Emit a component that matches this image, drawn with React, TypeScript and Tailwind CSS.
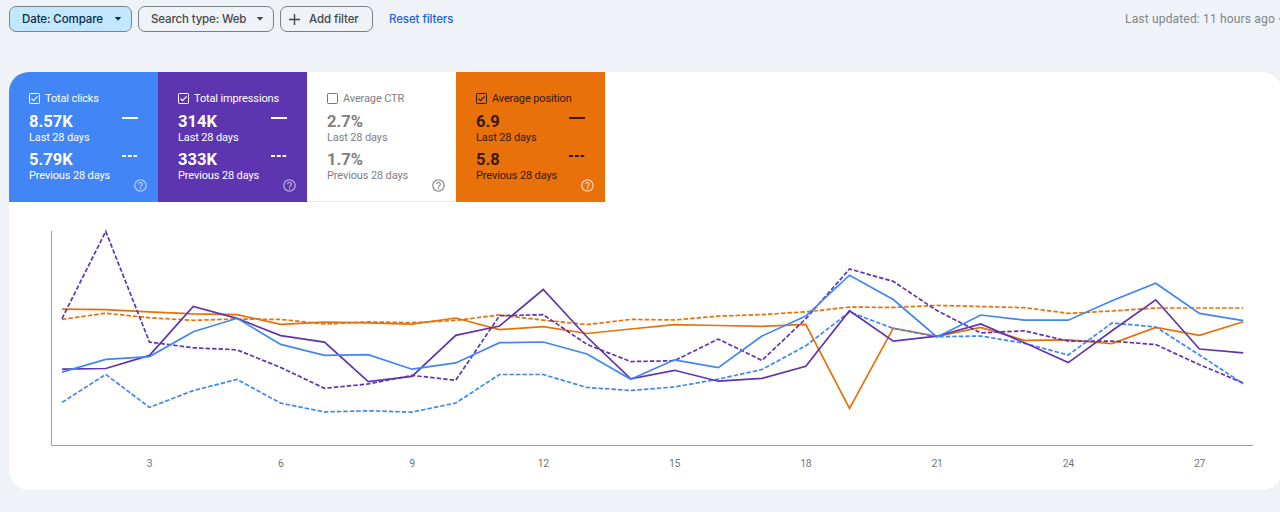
import clsx from "clsx"

const metrics = [
  { label: "Total clicks", current: "8.57K", previous: "5.79K", checked: true, tile: "bg-[#4285f4] text-white", box: "text-white", help: "text-white/60" },
  { label: "Total impressions", current: "314K", previous: "333K", checked: true, tile: "bg-[#5e35b1] text-white", box: "text-white", help: "text-white/60" },
  { label: "Average CTR", current: "2.7%", previous: "1.7%", checked: false, tile: "bg-white text-[#808080] border-b border-[#e8e8e8]", box: "text-[#757575]", help: "text-[#8c8c8c]" },
  { label: "Average position", current: "6.9", previous: "5.8", checked: true, tile: "bg-[#e8710a] text-[#35190a]", box: "text-[#35190a]", help: "text-white/70" },
]

// Vertical positions in chart space, one value per day
const series = [
  {
    color: "#e8710a",
    dashed: false,
    values: [309.2, 309.6, 311.8, 313.9, 314.6, 324.4, 322.1, 322.9, 324.2, 318, 329.6, 326.7, 333.5, 329, 324.6, 325.5, 326.4, 324.4, 408.5, 328.2, 336.4, 327.4, 340.3, 339.8, 343.6, 327.4, 335.3, 321.7],
  },
  {
    color: "#e8710a",
    dashed: true,
    values: [319.4, 313.2, 317.8, 320.3, 319, 319.4, 324, 321.9, 322.7, 320.4, 314.9, 320.2, 324.5, 319.4, 320, 316.1, 314.6, 311.8, 307.1, 307.4, 305.4, 306.5, 307.7, 313.3, 311, 308, 308, 308],
  },
  {
    color: "#5e35b1",
    dashed: true,
    values: [318.6, 231.4, 342.1, 347.8, 349.8, 367.5, 388.3, 384, 375.4, 380.3, 315.7, 314.7, 344.4, 361.6, 360.7, 339.1, 360.4, 318.8, 269, 281.4, 310.6, 332.9, 330.8, 341.1, 341.1, 344.6, 364.7, 383],
  },
  {
    color: "#4285f4",
    dashed: true,
    values: [402.4, 374.4, 407.4, 390.6, 379.4, 403.2, 411.9, 410.8, 412.1, 403, 374.5, 374.5, 387.5, 390.4, 387, 379.1, 369.5, 345.8, 312, 328.4, 336.8, 336, 343.3, 355, 323, 327, 355, 383.7],
  },
  {
    color: "#5e35b1",
    dashed: false,
    values: [369.2, 368.5, 355.4, 306.4, 318.4, 335.6, 342.1, 381.7, 376.4, 335.3, 326, 289.5, 337, 378.8, 370.3, 381.2, 378.4, 366.3, 310.7, 341.2, 336.2, 324, 342.8, 362.6, 330.8, 299.8, 349, 352.9],
  },
  {
    color: "#4285f4",
    dashed: false,
    values: [372.1, 359.4, 356.6, 331.7, 318.3, 344.4, 355.3, 354.7, 369.2, 362.9, 342.7, 342, 354, 379.2, 359.8, 367.6, 336.1, 316, 275.2, 299.5, 336.9, 315, 320.2, 320.2, 300.8, 283.2, 313.4, 320.7],
  },
]

const ticks = [3, 6, 9, 12, 15, 18, 21, 24, 27]
const dayX = (day: number) => 62 + (day - 1) * 43.75

function Caret() {
  return (
    <svg width="8" height="4" viewBox="0 0 8 4" fill="currentColor">
      <path d="M0.8 0h6.4L4 3.8z" />
    </svg>
  )
}

function Checkbox({ checked, className }: { checked: boolean; className: string }) {
  return (
    <svg width="11" height="11" viewBox="0 0 11 11" fill="none" stroke="currentColor" className={className}>
      <rect x="0.5" y="0.5" width="10" height="10" rx="0.8" />
      {checked && <path d="M2.5 5.6 4.5 7.6 8.7 3.3" strokeWidth="1.2" />}
    </svg>
  )
}

function HelpIcon({ className }: { className: string }) {
  return (
    <svg width="15" height="15" viewBox="0 0 24 24" fill="currentColor" className={className}>
      <path d="M11 18h2v-2h-2v2zm1-16C6.48 2 2 6.48 2 12s4.48 10 10 10 10-4.48 10-10S17.52 2 12 2zm0 18c-4.41 0-8-3.59-8-8s3.59-8 8-8 8 3.59 8 8-3.59 8-8 8zm0-14c-2.21 0-4 1.79-4 4h2c0-1.1.9-2 2-2s2 .9 2 2c0 2-3 1.75-3 5h2c0-2.25 3-2.5 3-5 0-2.21-1.79-4-4-4z" />
    </svg>
  )
}

function LineKey({ dashed }: { dashed?: boolean }) {
  return (
    <svg width="16" height="2" viewBox="0 0 16 2" stroke="currentColor" strokeWidth="2">
      <path d={dashed ? "M0 1h15.2" : "M0 1h16"} strokeDasharray={dashed ? "4 1.8" : undefined} />
    </svg>
  )
}

function MetricValue({ value, caption, showKey, dashed }: { value: string; caption: string; showKey: boolean; dashed?: boolean }) {
  return (
    <div className="h-[38px]">
      <div className="flex h-[19px] justify-between pr-5">
        <span className="text-[16.5px] leading-5 font-bold">{value}</span>
        <span className="pt-[5px]">{showKey && <LineKey dashed={dashed} />}</span>
      </div>
      <div className="text-[11px] leading-[14px] tracking-[-0.13px] whitespace-nowrap">{caption}</div>
    </div>
  )
}

function Metric({ metric }: { metric: (typeof metrics)[number] }) {
  return (
    <div className={clsx("h-[130px] w-[149px] pt-5 pl-5", metric.tile)}>
      <div className="flex h-[13px] items-center gap-[5px]">
        <Checkbox checked={metric.checked} className={metric.box} />
        <span className="text-[11px] leading-[13px] tracking-[-0.13px] whitespace-nowrap">{metric.label}</span>
      </div>
      <div className="mt-[7px]">
        <MetricValue value={metric.current} caption="Last 28 days" showKey={metric.checked} />
        <MetricValue value={metric.previous} caption="Previous 28 days" showKey={metric.checked} dashed />
      </div>
      <div className="-mt-[10px] flex justify-end pr-[10px]">
        <HelpIcon className={metric.help} />
      </div>
    </div>
  )
}

function Chart() {
  return (
    <svg width="1271" height="288" viewBox="9 202 1271 288" className="block">
      <path d="M51.5 231V445.5H1253" fill="none" stroke="#9e9e9e" />
      {series.map((line, i) => (
        <polyline
          key={i}
          points={line.values.map((y, day) => `${dayX(day + 1)},${y}`).join(" ")}
          fill="none"
          stroke={line.color}
          strokeWidth="1.7"
          strokeDasharray={line.dashed ? "4.5 2" : undefined}
        />
      ))}
      {ticks.map((day) => (
        <text key={day} x={dayX(day)} y="467" textAnchor="middle" fontSize="10.5" letterSpacing="-0.3" fill="#757575">
          {day}
        </text>
      ))}
    </svg>
  )
}

export default function App() {
  return (
    <div className="h-[512px] w-[1280px] overflow-hidden bg-[#eff3f8] font-[Roboto,sans-serif]">
      {/* Filters */}
      <header className="flex h-[72px] items-start justify-between pt-[6px] pl-[9px]">
        <div className="flex items-center font-[Inter,sans-serif] text-[11.5px] font-medium whitespace-nowrap text-[#444746]">
          <button className="flex h-[26px] w-[123px] items-center justify-between rounded-[7px] border border-[#7b8388] bg-[#c2e7ff] pr-[9px] pl-3 text-[#0b2c42]">
            <span className="pt-px tracking-[-0.1px]">Date: Compare</span>
            <Caret />
          </button>
          <button className="ml-[6px] flex h-[26px] w-[136px] items-center justify-between rounded-[7px] border border-[#7b8083] pr-[9px] pl-3">
            <span className="pt-px tracking-[-0.15px]">Search type: Web</span>
            <Caret />
          </button>
          <button className="ml-[6px] flex h-[26px] w-[93px] items-center rounded-[7px] border border-[#7b8083] pl-2">
            <svg width="11" height="11" viewBox="0 0 11 11" stroke="currentColor" strokeWidth="1.4">
              <path d="M5.5 0v11M0 5.5h11" />
            </svg>
            <span className="ml-[9px] pt-px tracking-[-0.1px]">Add filter</span>
          </button>
          <a className="ml-4 pt-px tracking-[-0.1px] text-[#1b62d1]">Reset filters</a>
        </div>
        <div className="flex w-[155px] items-center pt-[4px] text-[12px] leading-[18px] tracking-[0.17px] whitespace-nowrap text-[#808387]">
          <span>Last updated: 11 hours ago</span>
          {/* Separator dot */}
          <span className="ml-[4px] h-[2px] w-[2px] shrink-0 rounded-full bg-[#a5a8ab]" />
        </div>
      </header>

      {/* Performance card */}
      <main className="ml-[9px] h-[418px] w-[1273px] overflow-hidden rounded-[20px] bg-white">
        <div className="flex">
          {metrics.map((metric) => (
            <Metric key={metric.label} metric={metric} />
          ))}
        </div>
        <Chart />
      </main>
    </div>
  )
}
